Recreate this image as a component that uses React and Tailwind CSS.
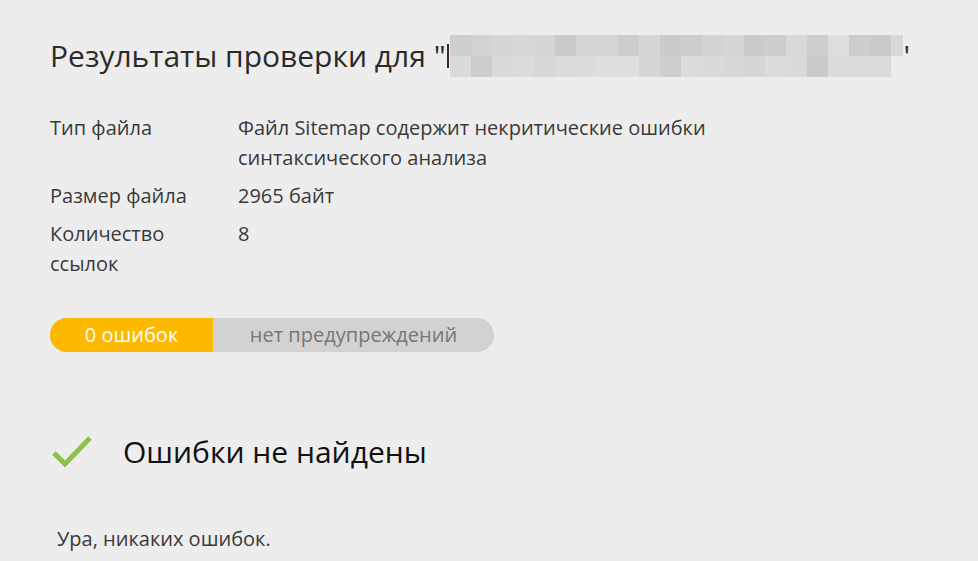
import React from 'react';

const blurTop = ['#cfcfd1', '#d2d2d4', '#d6d6d8', '#d8d8da', '#d6d6d8', '#cbcbcd', '#d5d3d3', '#d4d4d6', '#cdcdcf', '#d6d6d8', '#cbcbcd', '#cdcdcf', '#d3d3d5', '#d6d6d8', '#cbcbcd', '#cdcdcf', '#d9d9db', '#cfcfd1', '#dddddf', '#cdcdcf', '#cacacc', '#d8d8da'];
const blurBottom = ['#dadadc', '#cdcdcf', '#dadadc', '#dcdcde', '#d8d8da', '#dbdbdd', '#dcdcde', '#dededf', '#dededf', '#d6d6d8', '#cfcfd1', '#dcdcde', '#dadadc', '#d8d8da', '#d6d6d8', '#dcdcde', '#dadadc', '#cbcbcd', '#dbdbdd', '#dbdbdd', '#dbdbdd', '#ededed'];

const Redacted = () => (
  <span className="flex flex-col w-[453px] shrink-0 overflow-hidden">
    <span className="flex">
      {blurTop.map((c, i) => (
        <span key={i} className="block h-[21px] w-[21px] shrink-0" style={{ background: c }} />
      ))}
    </span>
    <span className="flex">
      {blurBottom.map((c, i) => (
        <span key={i} className="block h-[21px] w-[21px] shrink-0" style={{ background: c }} />
      ))}
    </span>
  </span>
);

const rows = [
  { label: 'Тип файла', value: 'Файл Sitemap содержит некритические ошибки синтаксического анализа' },
  { label: 'Размер файла', value: '2965 байт' },
  { label: 'Количество ссылок', value: '8' },
];

export default function App() {
  return (
    <div className="min-h-[561px] w-full bg-[#ededed] font-['Open_Sans',sans-serif] text-[#333]">
      <div className="pl-[50px] pt-[35px]">
        <h1 className="flex items-center text-[30px] leading-[42px] text-[#2b2b2b] whitespace-nowrap">
          <span>Результаты проверки для "</span>
          <span className="ml-[1px] mr-[1px] h-[24px] w-[2px] shrink-0 bg-[#3a2a2a]" />
          <Redacted />
          <span className="ml-[1px]">'</span>
        </h1>

        <div className="mt-[36px] flex flex-col gap-[8px] text-[20px] leading-[30px] text-[#3a3a3a]">
          {rows.map((r) => (
            <div key={r.label} className="flex">
              <div className="w-[188px] shrink-0 pr-[50px]">{r.label}</div>
              <div className="w-[500px]">{r.value}</div>
            </div>
          ))}
        </div>

        <div className="mt-[39px] flex h-[34px] w-[444px] overflow-hidden rounded-full bg-[#d2d2d2] text-[20px]">
          <div className="flex w-[163px] items-center justify-center bg-[#fdb900] text-white">0 ошибок</div>
          <div className="flex flex-1 items-center justify-center text-[#777]">нет предупреждений</div>
        </div>

        <div className="mt-[80px] flex items-center">
          <svg width="42" height="34" viewBox="0 0 42 34" className="ml-[1px]">
            <path d="M3 18 L14 29 L39 3" fill="none" stroke="#8bc34a" strokeWidth="5" />
          </svg>
          <h2 className="ml-[30px] text-[30px] leading-[40px] text-[#111]">Ошибки не найдены</h2>
        </div>

        <p className="mt-[52px] ml-[7px] text-[20px] leading-[30px] text-[#3a3a3a]">Ура, никаких ошибок.</p>
      </div>
    </div>
  );
}
